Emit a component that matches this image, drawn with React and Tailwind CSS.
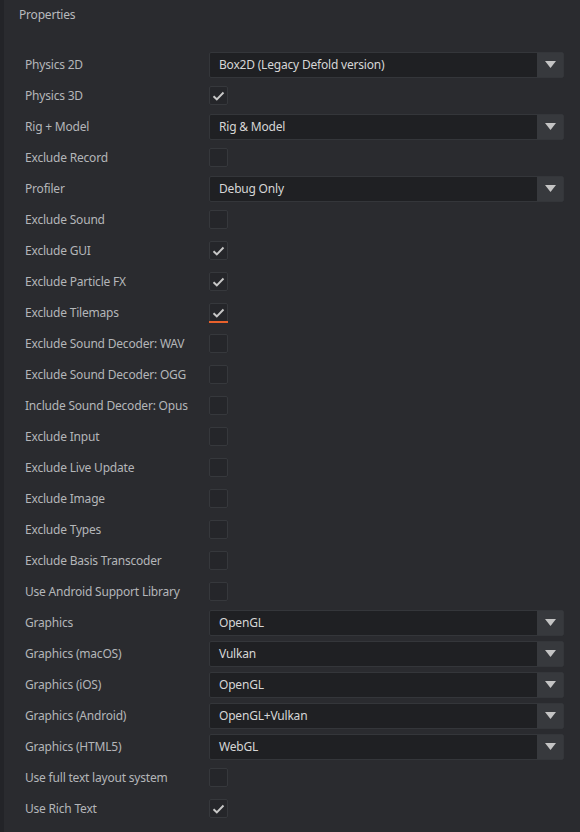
import React from 'react'

const rows = [
  { label: 'Physics 2D', type: 'select', value: 'Box2D (Legacy Defold version)' },
  { label: 'Physics 3D', type: 'check', checked: true },
  { label: 'Rig + Model', type: 'select', value: 'Rig & Model' },
  { label: 'Exclude Record', type: 'check' },
  { label: 'Profiler', type: 'select', value: 'Debug Only' },
  { label: 'Exclude Sound', type: 'check' },
  { label: 'Exclude GUI', type: 'check', checked: true },
  { label: 'Exclude Particle FX', type: 'check', checked: true },
  { label: 'Exclude Tilemaps', type: 'check', checked: true, focused: true },
  { label: 'Exclude Sound Decoder: WAV', type: 'check' },
  { label: 'Exclude Sound Decoder: OGG', type: 'check' },
  { label: 'Include Sound Decoder: Opus', type: 'check' },
  { label: 'Exclude Input', type: 'check' },
  { label: 'Exclude Live Update', type: 'check' },
  { label: 'Exclude Image', type: 'check' },
  { label: 'Exclude Types', type: 'check' },
  { label: 'Exclude Basis Transcoder', type: 'check' },
  { label: 'Use Android Support Library', type: 'check' },
  { label: 'Graphics', type: 'select', value: 'OpenGL' },
  { label: 'Graphics (macOS)', type: 'select', value: 'Vulkan' },
  { label: 'Graphics (iOS)', type: 'select', value: 'OpenGL' },
  { label: 'Graphics (Android)', type: 'select', value: 'OpenGL+Vulkan' },
  { label: 'Graphics (HTML5)', type: 'select', value: 'WebGL' },
  { label: 'Use full text layout system', type: 'check' },
  { label: 'Use Rich Text', type: 'check', checked: true },
]

function Select({ value }) {
  return (
    <div className="flex h-[26px] flex-1 items-stretch rounded-[2px] border border-[#34363a] bg-[#1f2023]">
      <div className="flex flex-1 items-center pl-[9px] text-[12px] tracking-[-0.2px] text-[#d6d6d6]">{value}</div>
      <div className="flex w-[26px] items-center justify-center bg-[#37393d]">
        <svg width="11" height="7" viewBox="0 0 11 7">
          <path d="M0 0H11L5.5 7Z" fill="#c4c4c4" />
        </svg>
      </div>
    </div>
  )
}

function Check({ checked, focused }) {
  return (
    <div className="relative flex h-[19px] w-[19px] items-center justify-center rounded-[2px] border border-[#36383c] bg-[#25262a]">
      {checked && (
        <svg width="13" height="10" viewBox="0 0 13 10">
          <path d="M1.5 5.2L4.8 8.3L11.5 1.5" fill="none" stroke="#c8c8c8" strokeWidth="1.9" />
        </svg>
      )}
      {focused && <div className="absolute -bottom-[2px] -left-px -right-px h-[2px] bg-[#e8612c]" />}
    </div>
  )
}

export default function App() {
  return (
    <div className="flex h-[832px] w-[580px] bg-[#2a2b2f]" style={{ fontFamily: '"Noto Sans", "Open Sans", sans-serif' }}>
      <div className="w-[4px] bg-[#232428]" />
      <div className="flex flex-1 flex-col">
        <div className="flex h-[30px] items-center pl-[15px] text-[12px] tracking-[-0.2px] text-[#b8babd]">Properties</div>
        <div className="flex flex-col pt-[19px] pr-[16px]">
          {rows.map((r) => (
            <div key={r.label} className="flex h-[31px] items-center">
              <div className="w-[205px] pl-[21px] text-[12px] tracking-[-0.2px] text-[#b4b6b9]">{r.label}</div>
              {r.type === 'select' ? <Select value={r.value} /> : <Check checked={r.checked} focused={r.focused} />}
            </div>
          ))}
        </div>
      </div>
    </div>
  )
}
